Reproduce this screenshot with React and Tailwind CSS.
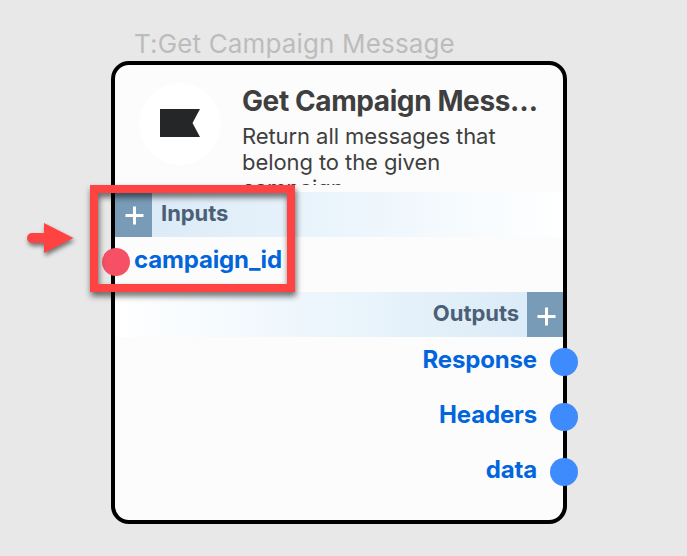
import React from "react";

function AddButton({ className }) {
  return (
    <div className={`flex h-full shrink-0 items-center justify-center bg-[#789bb7] ${className}`}>
      <svg width="19" height="19" viewBox="0 0 19 19">
        <path d="M0.5 9.5H18.5M9.5 0.5V18.5" stroke="#fff" strokeWidth="3" />
      </svg>
    </div>
  );
}

function Output({ name }) {
  return (
    <div className="relative flex h-[55px] justify-end pr-[26px] pt-[7px] text-[24px] leading-[32px] font-bold tracking-[-0.15px] text-[#0265dc]">
      <span>{name}</span>
      <i className="absolute top-[11px] -right-[15px] size-7 rounded-full bg-[#3d8bfd]" />
    </div>
  );
}

export default function App() {
  return (
    <main className="relative h-[556px] w-[687px] overflow-hidden bg-[#e8e8e8] pt-7 pl-[111px] font-['Inter',sans-serif]">
      <div className="h-8 pl-[23px] text-[26px] leading-8 tracking-[0.15px] whitespace-nowrap text-[#bcbcbc]">T:Get Campaign Message</div>
      <section className="mt-[0.5px] h-[463px] w-[456px] rounded-[18px] border-4 border-black bg-[#fcfcfc]">
        <header className="flex h-[127.5px] pt-[18px] pl-6">
          <div className="flex size-[82px] shrink-0 items-center justify-center rounded-full bg-white">
            <svg width="40" height="28" viewBox="0 0 40 28" className="-mt-px">
              <path d="M0 0H40L32.5 14L40 28H0Z" fill="#242628" />
            </svg>
          </div>
          <div className="ml-[21px] w-[300px] text-[#3f3f3f]">
            <h1 className="truncate text-[28px] leading-9 font-bold tracking-[-0.4px]">Get Campaign Messages</h1>
            <p className="mt-[4px] h-[62.5px] w-[275px] overflow-hidden text-[22px] leading-[26px] tracking-[-0.08px]">
              Return all messages that belong to the given campaign.
            </p>
          </div>
        </header>
        <div className="flex h-[45px] bg-linear-to-r from-[#d8e9f6] via-[#ebf5fc] to-white">
          <AddButton className="w-[37px] pt-[2px] pl-px" />
          <span className="pt-[6px] pl-[9px] text-[22px] leading-[30px] font-bold tracking-[-0.05px] text-[#4b6076]">Inputs</span>
        </div>
        <div className="relative flex h-[55px] pt-[7px] pl-[19px] text-[24px] leading-[32px] font-bold tracking-[-0.15px] text-[#0265dc]">
          <i className="absolute top-[11px] -left-[13px] size-7 rounded-full bg-[#f55064]" />
          <span>campaign_id</span>
        </div>
        <div className="flex h-[45px] justify-end bg-linear-to-r from-white via-[#ebf5fc] to-[#d8e9f6]">
          <span className="pt-[6px] pr-[8px] text-[22px] leading-[30px] font-bold tracking-[-0.05px] text-[#4b6076]">Outputs</span>
          <AddButton className="w-[36px] pt-[4px] pl-[2px]" />
        </div>
        <Output name="Response" />
        <Output name="Headers" />
        <Output name="data" />
      </section>
      <div className="absolute top-[185px] left-[90px] h-[107px] w-[205px] border-8 border-[#ff4343] drop-shadow-[1px_4px_3px_rgba(0,0,0,0.6)]" />
      <svg className="absolute top-[220px] left-[24px] drop-shadow-[1px_3px_2px_rgba(0,0,0,0.5)]" width="54" height="36" viewBox="0 0 54 36">
        <path d="M20 3L49.500 18L20 33V23H8A5 5 0 0 1 8 13H20Z" fill="#ff4343" />
      </svg>
    </main>
  );
}
